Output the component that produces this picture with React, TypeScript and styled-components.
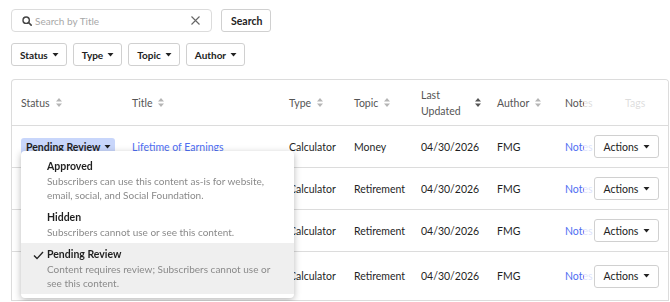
import styled, { createGlobalStyle } from "styled-components";

const GlobalStyle = createGlobalStyle`
  html, body {
    margin: 0;
    padding: 0;
    background: #fff;
    overflow: hidden;
  }
  body {
    font-family: "Lato", "Noto Sans", sans-serif;
    font-size: 10.5px;
    color: #222;
  }
`;

interface Row {
  title: string;
  type: string;
  topic: string;
  updated: string;
  author: string;
  tall?: boolean;
}

const rows: Row[] = [
  { title: "Lifetime of Earnings", type: "Calculator", topic: "Money", updated: "04/30/2026", author: "FMG" },
  { title: "Retirement Planner", type: "Calculator", topic: "Retirement", updated: "04/30/2026", author: "FMG" },
  { title: "Retirement Savings", type: "Calculator", topic: "Retirement", updated: "04/30/2026", author: "FMG" },
  { title: "Retirement Income", type: "Calculator", topic: "Retirement", updated: "04/30/2026", author: "FMG", tall: true },
];

const statusOptions = [
  {
    name: "Approved",
    desc: ["Subscribers can use this content as-is for website,", "email, social, and Social Foundation."],
  },
  { name: "Hidden", desc: ["Subscribers cannot use or see this content."] },
  {
    name: "Pending Review",
    desc: ["Content requires review; Subscribers cannot use or", "see this content."],
    selected: true,
  },
];

const Caret = () => (
  <svg width="7" height="4" viewBox="0 0 7 4">
    <path d="M0.5 0h6L3.5 3.6z" fill="currentColor" />
  </svg>
);

const SortIcon = ({ active }: { active?: boolean }) => (
  <svg width="6" height="9" viewBox="0 0 6 9">
    <path d="M3 0l3 3.5H0z M3 9l3-3.5H0z" fill={active ? "#555" : "#b5b5b5"} />
  </svg>
);

const App = function () {
  return (
    <Page>
      <GlobalStyle />
      <SearchBar>
        <SearchField>
          <svg width="10" height="10" viewBox="0 0 12 12">
            <circle cx="5" cy="5" r="3.8" fill="none" stroke="#444" strokeWidth="1.7" />
            <path d="M7.8 7.8L11 11" stroke="#444" strokeWidth="1.9" strokeLinecap="round" />
          </svg>
          <SearchInput placeholder="Search by Title" />
          <svg width="9" height="9" viewBox="0 0 9 9">
            <path d="M0.5 0.5l8 8M8.5 0.5l-8 8" stroke="#666" strokeWidth="1.1" />
          </svg>
        </SearchField>
        <Button>Search</Button>
      </SearchBar>
      <Filters>
        {["Status", "Type", "Topic", "Author"].map((f) => (
          <FilterButton key={f}>
            {f}
            <Caret />
          </FilterButton>
        ))}
      </Filters>
      <TableWrapper>
        <Table>
          <colgroup>
            <col style={{ width: 111 }} />
            <col style={{ width: 157 }} />
            <col style={{ width: 65 }} />
            <col style={{ width: 67 }} />
            <col style={{ width: 76 }} />
            <col style={{ width: 68 }} />
            <col style={{ width: 63 }} />
            <col style={{ width: 90 }} />
            <col style={{ width: 85 }} />
          </colgroup>
          <thead>
            <tr>
              <Th>
                <HeadLabel>Status <SortIcon /></HeadLabel>
              </Th>
              <Th>
                <HeadLabel>Title <SortIcon /></HeadLabel>
              </Th>
              <Th>
                <HeadLabel>Type <SortIcon /></HeadLabel>
              </Th>
              <Th>
                <HeadLabel>Topic <SortIcon /></HeadLabel>
              </Th>
              <Th>
                <HeadLabel>
                  <span>
                    Last
                    <br />
                    Updated
                  </span>
                  <SortIcon active />
                </HeadLabel>
              </Th>
              <Th>
                <HeadLabel>Author <SortIcon /></HeadLabel>
              </Th>
              <Th>Notes</Th>
              <Th>Tags</Th>
              <StickyTh />
            </tr>
          </thead>
          <tbody>
            {rows.map((r, i) => (
              <BodyRow key={r.title} $tall={r.tall}>
                <Td>
                  {i === 0 && (
                    <StatusHolder>
                      <StatusPill>
                        Pending Review
                        <Caret />
                      </StatusPill>
                      <Menu>
                        {statusOptions.map((o) => (
                          <MenuItem key={o.name} $selected={o.selected}>
                            {o.selected && (
                              <Check width="11" height="9" viewBox="0 0 11 9">
                                <path d="M1 4.6l3 3L10 1" fill="none" stroke="#222" strokeWidth="1.4" />
                              </Check>
                            )}
                            <MenuTitle>{o.name}</MenuTitle>
                            <MenuDesc>
                              {o.desc.map((d) => (
                                <div key={d}>{d}</div>
                              ))}
                            </MenuDesc>
                          </MenuItem>
                        ))}
                      </Menu>
                    </StatusHolder>
                  )}
                </Td>
                <Td>{i === 0 && <Link>{r.title}</Link>}</Td>
                <Td>{r.type}</Td>
                <Td>{r.topic}</Td>
                <Td>{r.updated}</Td>
                <Td>{r.author}</Td>
                <Td>
                  <Link>Notes</Link>
                </Td>
                <Td />
                <StickyTd>
                  <ActionButton>
                    Actions
                    <Caret />
                  </ActionButton>
                </StickyTd>
              </BodyRow>
            ))}
          </tbody>
        </Table>
      </TableWrapper>
    </Page>
  );
};
export default App;

const Page = styled.div`
  padding: 9px 1px 0 11px;
`;

const SearchBar = styled.div`
  display: flex;
  gap: 9px;
  height: 23px;
`;

const SearchField = styled.div`
  width: 201px;
  box-sizing: border-box;
  border: 1px solid #dcdcdc;
  border-radius: 4px;
  display: flex;
  align-items: center;
  padding: 0 11px 0 10px;
  gap: 3px;
`;

const SearchInput = styled.input`
  flex: 1;
  min-width: 0;
  border: none;
  outline: none;
  padding: 0;
  font-family: inherit;
  font-size: 10px;
  color: #222;
  &::placeholder {
    color: #a8a8a8;
  }
`;

const Button = styled.button`
  display: inline-flex;
  align-items: center;
  gap: 4px;
  height: 23px;
  box-sizing: border-box;
  padding: 0 8px 0 9px;
  background: #fff;
  border: 1px solid #d0d0d0;
  border-radius: 3px;
  font-family: inherit;
  font-size: 10.5px;
  font-weight: 700;
  color: #222;
`;

const FilterButton = styled(Button)`
  font-size: 10px;
  padding: 0 7px 0 8px;
`;

const Filters = styled.div`
  display: flex;
  gap: 6px;
  margin-top: 11px;
`;

const TableWrapper = styled.div`
  margin-top: 13px;
  border: 1px solid #dcdcdc;
  border-bottom: none;
  border-radius: 4px 4px 0 0;
  overflow: hidden;
  position: relative;
`;

const Table = styled.table`
  table-layout: fixed;
  border-collapse: collapse;
  width: 782px;
`;

const Th = styled.th`
  height: 45px;
  padding: 0 0 0 9px;
  text-align: left;
  font-weight: 400;
  color: #555;
  white-space: nowrap;
  vertical-align: middle;
  &:nth-child(8) {
    padding-left: 6px;
  }
`;

const HeadLabel = styled.span`
  display: inline-flex;
  align-items: center;
  gap: 6px;
  line-height: 16px;
  span {
    margin-right: 8px;
  }
`;

const BodyRow = styled.tr<{ $tall?: boolean }>`
  height: ${(p) => (p.$tall ? 49 : 42)}px;
  border-top: 1px solid #dcdcdc;
  &:last-child {
    border-bottom: 1px solid #dcdcdc;
  }
`;

const Td = styled.td`
  padding: 0 0 0 9px;
  font-weight: 400;
  color: #1f1f1f;
  white-space: nowrap;
  vertical-align: middle;
`;

const StickyTh = styled.th`
  position: sticky;
  right: 0;
  background: rgba(255, 255, 255, 0.8);
  border-left: 1px solid #dcdcdc;
`;

const StickyTd = styled.td`
  position: sticky;
  right: 0;
  background: rgba(255, 255, 255, 0.8);
  border-left: 1px solid #dcdcdc;
  padding: 0 0 0 10px;
  vertical-align: middle;
`;

const Link = styled.span`
  color: #4e6ef2;
`;

const StatusHolder = styled.div`
  position: relative;
  display: inline-block;
`;

const StatusPill = styled.span`
  display: inline-flex;
  align-items: center;
  gap: 4px;
  height: 18px;
  padding: 0 4px 0 5px;
  background: #c8d6fb;
  border-radius: 3px;
  font-weight: 700;
  color: #1f1f1f;
`;

const Menu = styled.div`
  position: absolute;
  top: 13px;
  left: 0;
  z-index: 5;
  width: 273px;
  padding: 4px 0;
  background: #fff;
  border-radius: 4px;
  box-shadow: 0 2px 7px rgba(0, 0, 0, 0.28);
`;

const MenuItem = styled.div<{ $selected?: boolean }>`
  position: relative;
  padding: 4px 12px 4px 26px;
  background: ${(p) => (p.$selected ? "#efefef" : "transparent")};
  white-space: nowrap;
`;

const Check = styled.svg`
  position: absolute;
  left: 12px;
  top: 8px;
`;

const MenuTitle = styled.div`
  font-size: 10.5px;
  line-height: 14px;
  font-weight: 700;
  color: #1f1f1f;
`;

const MenuDesc = styled.div`
  margin-top: 1px;
  font-size: 10px;
  line-height: 14px;
  color: #8a8a8a;
`;

const ActionButton = styled(Button)`
  font-weight: 400;
  gap: 5px;
  padding: 0 8px 0 9px;
  height: 23px;
`;
